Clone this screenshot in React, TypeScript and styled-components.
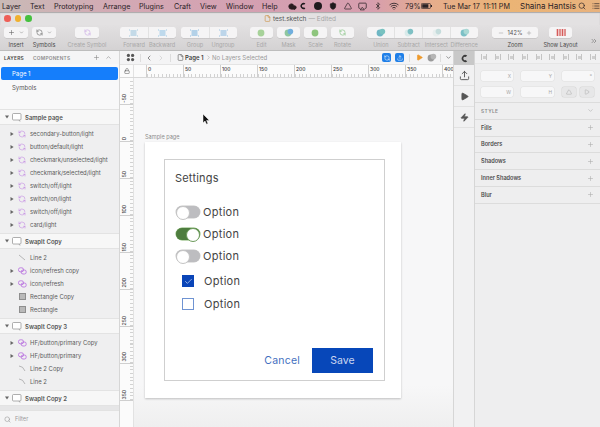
import React from 'react';
import styled, { createGlobalStyle } from 'styled-components';
import {
  Airplay, Bluetooth, ChevronDown, ChevronLeft, ChevronRight, ChevronUp, ChevronsRight, Cloud, File,
  Lock, Minus, Play, Plus, RefreshCcw, Search, Shield, Upload, Wifi, Zap, List, Triangle, Check,
} from 'lucide-react';

const GlobalStyle = createGlobalStyle`
  html, body { margin: 0; padding: 0; background: #eee; overflow: hidden; }
  * { box-sizing: border-box; }
  body { font-family: Inter, "Liberation Sans", sans-serif; }
`;

const Frame = styled.div`
  width: 600px;
  height: 427px;
  overflow: hidden;
  display: flex;
  flex-direction: column;
`;

/* menu bar */
const MenuBar = styled.div`
  height: 12px;
  flex: none;
  display: flex;
  align-items: center;
  padding-left: 2px;
  background: linear-gradient(90deg, #c9bab6 0, #d3a9b4 20%, #d49fb1 45%, #d79eae 62%, #e6ad8c 72%, #ebb475 85%, #e8b27e 100%);
  font-size: 7.2px;
  color: #2a2226;
  white-space: nowrap;
`;

const MenuItem = styled.span<{ $w: number; $ml?: number }>`
  width: ${p => p.$w}px;
  margin-left: ${p => p.$ml ?? 0}px;
  flex: none;
`;

const UserName = styled(MenuItem)`
  font-size: 8px;
`;

const MenuIcon = styled.span<{ $w: number }>`
  width: ${p => p.$w}px;
  flex: none;
  display: flex;
  justify-content: center;
  align-items: center;
`;

/* title + toolbar */
const TitleRow = styled.div`
  height: 13px;
  flex: none;
  position: relative;
  display: flex;
  align-items: center;
  justify-content: center;
  gap: 2px;
  background: #e3e1e2;
  box-shadow: inset 0 1px 1px rgba(0, 0, 0, 0.25);
  font-size: 6.5px;
  color: #555;
`;

const Lights = styled.div`
  position: absolute;
  left: 4px;
  top: 3px;
  display: flex;
  gap: 4px;
`;

const Light = styled.span<{ $c: string }>`
  width: 6.5px;
  height: 6.5px;
  border-radius: 50%;
  background: ${p => p.$c};
`;

const Edited = styled.span`
  color: #a5a5a5;
`;

const Toolbar = styled.div`
  height: 26px;
  flex: none;
  display: flex;
  padding-top: 2px;
  background: linear-gradient(#e2e0e1, #d4d2d3);
  border-bottom: 1px solid #bdbdbd;
`;

const ToolGroup = styled.div<{ $ml: number; $w: number }>`
  margin-left: ${p => p.$ml}px;
  width: ${p => p.$w}px;
  flex: none;
  display: flex;
  flex-direction: column;
`;

const ToolButton = styled.div`
  height: 11px;
  display: flex;
  background: #f5f4f5;
  border-radius: 2.5px;
  box-shadow: 0 0.5px 0.5px rgba(0, 0, 0, 0.15);
`;

const ToolSeg = styled.div`
  flex: 1;
  min-width: 0;
  display: flex;
  align-items: center;
  justify-content: center;
  gap: 4px;
  & + & { border-left: 1px solid #e2e2e2; }
`;

const ToolLabels = styled.div`
  display: flex;
  margin-top: 4px;
`;

const ToolLabel = styled.span<{ $on?: boolean }>`
  flex: 1;
  min-width: 0;
  display: flex;
  justify-content: center;
  white-space: nowrap;
  font-size: 5.6px;
  line-height: 7px;
  color: ${p => (p.$on ? '#4a4a4a' : '#a8a8a8')};
`;

const ZoomValue = styled.span`
  font-size: 5.6px;
  color: #555;
`;

const MoreTools = styled.div`
  margin: 2px 0 0 18px;
  color: #777;
`;

/* main split */
const Main = styled.div`
  flex: 1;
  min-height: 0;
  display: flex;
`;

/* left sidebar */
const Sidebar = styled.aside`
  width: 120px;
  flex: none;
  display: flex;
  flex-direction: column;
  background: #efeff0;
  border-right: 1px solid #d6d6d6;
  overflow: hidden;
`;

const TabHeader = styled.div`
  height: 13px;
  flex: none;
  display: flex;
  align-items: center;
  padding: 0 5px 0 4px;
  font-size: 4.8px;
  font-weight: 600;
  letter-spacing: 0.25px;
  background: #f5f5f6;
`;

const Tab = styled.span<{ $on?: boolean }>`
  color: ${p => (p.$on ? '#444' : '#8b8b8b')};
  width: ${p => (p.$on ? 29 : 60)}px;
`;

const HeaderIcons = styled.span`
  display: flex;
  gap: 5px;
  color: #888;
`;

const PageList = styled.div`
  height: 45px;
  flex: none;
  padding: 3px 1px 0;
  background: #f8f8f9;
`;

const PageRow = styled.div<{ $on?: boolean }>`
  height: 13px;
  display: flex;
  align-items: center;
  padding-left: 11px;
  border-radius: 2px;
  font-size: 6px;
  margin-bottom: 1px;
  background: ${p => (p.$on ? '#157efb' : 'transparent')};
  color: ${p => (p.$on ? '#fff' : '#555')};
`;

const GroupHeader = styled.div`
  height: 16px;
  flex: none;
  display: flex;
  align-items: center;
  gap: 3px;
  padding-left: 5px;
  background: #f7f7f7;
  border-top: 1px solid #e3e3e3;
  border-bottom: 1px solid #e3e3e3;
  font-size: 6px;
  font-weight: 600;
  color: #555;
`;

const Children = styled.div`
  flex: none;
  padding: 2px 0;
`;

const LayerRow = styled.div`
  height: 13px;
  display: flex;
  align-items: center;
  font-size: 5.9px;
  color: #5b5b5b;
  white-space: nowrap;
`;

const Disclosure = styled.span`
  width: 16px;
  flex: none;
  padding-left: 10px;
  display: flex;
`;

const LayerIcon = styled.span`
  width: 12px;
  flex: none;
  display: flex;
  justify-content: center;
  margin-right: 2px;
`;

const SelectedStub = styled.div`
  flex: 1;
  background: #e6e6e7;
`;

const FilterBar = styled.div`
  height: 17px;
  flex: none;
  display: flex;
  align-items: center;
  gap: 4px;
  padding-left: 4px;
  background: #f4f4f5;
  border-top: 1px solid #e2e2e2;
  font-size: 5.6px;
  color: #9a9a9a;
`;

/* center */
const Center = styled.section`
  flex: 1;
  min-width: 0;
  display: flex;
  flex-direction: column;
`;

const NavBar = styled.div`
  height: 13px;
  flex: none;
  display: flex;
  align-items: center;
  padding-left: 6px;
  background: #f4f4f5;
  font-size: 6px;
  color: #999;
  white-space: nowrap;
`;

const NavSep = styled.span<{ $ml: number }>`
  width: 1px;
  height: 8px;
  flex: none;
  background: #ddd;
  margin-left: ${p => p.$ml}px;
`;

const NavSlot = styled.span<{ $ml: number }>`
  margin-left: ${p => p.$ml}px;
  flex: none;
  display: flex;
  align-items: center;
`;

const PageName = styled.span`
  width: 20px;
  flex: none;
  color: #444;
  font-weight: 600;
  margin-left: 1px;
`;

const NoSelection = styled.span`
  width: 54px;
  flex: none;
`;

const BlueBadge = styled.span`
  width: 9px;
  height: 9px;
  border-radius: 2px;
  background: #1f7fe8;
  display: flex;
  align-items: center;
  justify-content: center;
`;

const TopRuler = styled.div`
  height: 14px;
  flex: none;
  display: flex;
  overflow: hidden;
  background: #fbfbfb;
  border-top: 1px solid #e4e4e4;
  border-bottom: 1px solid #d8d8d8;
`;

const RulerCorner = styled.div`
  width: 14px;
  flex: none;
  display: flex;
  align-items: center;
  justify-content: center;
  color: #555;
  border-right: 1px solid #e2e2e2;
`;

const RulerLead = styled.div`
  width: 12px;
  flex: none;
`;

const RulerCell = styled.div`
  width: 37px;
  flex: none;
  padding: 1px 0 0 1px;
  font-size: 5px;
  line-height: 6px;
  font-weight: 500;
  color: #444;
  border-left: 1px solid #cfcfcf;
  background: repeating-linear-gradient(90deg, #d2d2d2 0 1px, transparent 1px 3.7px) bottom / 100% 3px no-repeat;
`;

const CanvasRow = styled.div`
  flex: 1;
  min-height: 0;
  display: flex;
`;

const SideRuler = styled.div`
  width: 14px;
  flex: none;
  display: flex;
  flex-direction: column;
  background: #fbfbfb;
  border-right: 1px solid #e2e2e2;
  overflow: hidden;
`;

const SideCell = styled.div<{ $h: number }>`
  height: ${p => p.$h}px;
  flex: none;
  display: flex;
  flex-direction: column;
  justify-content: flex-end;
  align-items: flex-start;
  padding: 0 0 1px 1px;
  border-bottom: 1px solid #cfcfcf;
  background: repeating-linear-gradient(0deg, #d2d2d2 0 1px, transparent 1px 3.7px) right / 3px 100% no-repeat;
`;

const SideLabel = styled.span`
  writing-mode: vertical-rl;
  transform: rotate(180deg);
  font-size: 5px;
  line-height: 6px;
  font-weight: 500;
  color: #444;
`;

const Canvas = styled.div`
  flex: 1;
  position: relative;
  padding: 55px 0 0 11px;
  background: linear-gradient(#f7f7f8 0, #f7f7f8 88%, #efefef 100%);
  overflow: hidden;
`;

const Cursor = styled.svg`
  position: absolute;
  left: 68px;
  top: 36px;
`;

const ArtboardName = styled.div`
  height: 9px;
  font-size: 5.6px;
  line-height: 9px;
  color: #8d8d8d;
`;

const Artboard = styled.div`
  width: 256px;
  height: 256px;
  padding: 17px 16px 17px 19px;
  background: #fff;
  box-shadow: 0 1px 2px rgba(0, 0, 0, 0.22);
`;

const Card = styled.div`
  height: 222px;
  width: 221px;
  display: flex;
  flex-direction: column;
  padding: 11px 11px 7px;
  border: 1px solid #cfcfcf;
  font-family: Inter, "Open Sans", sans-serif;
`;

const CardTitle = styled.div`
  height: 14px;
  margin-left: -1px;
  font-size: 11px;
  line-height: 14px;
  letter-spacing: 0.2px;
  color: #444;
  margin-bottom: 16px;
`;

const OptionRow = styled.div`
  height: 22px;
  display: flex;
  align-items: center;
  gap: 3px;
`;

const OptionText = styled.span`
  font-size: 11px;
  letter-spacing: 0.3px;
  color: #444;
`;

const Toggle = styled.span<{ $on?: boolean }>`
  width: 24px;
  height: 12px;
  border-radius: 6px;
  display: flex;
  justify-content: ${p => (p.$on ? 'flex-end' : 'flex-start')};
  background: ${p => (p.$on ? '#4e7d3f' : '#bdbdc0')};
  box-shadow: 0 0 0 0.5px ${p => (p.$on ? '#7fb069' : '#c8c8c8')};

  &::after {
    content: '';
    width: 12px;
    height: 12px;
    border-radius: 50%;
    background: #fff;
    border: 1px solid ${p => (p.$on ? '#6d9b5c' : '#c4c4c4')};
  }
`;

const CheckGroup = styled.div`
  margin: 3px 0 0 6px;
`;

const CheckRow = styled.div`
  height: 22.5px;
  display: flex;
  align-items: center;
  gap: 10px;
`;

const CheckBox = styled.span<{ $on?: boolean }>`
  width: 12px;
  height: 12px;
  display: flex;
  align-items: center;
  justify-content: center;
  background: ${p => (p.$on ? '#0a45b8' : '#fff')};
  border: 1px solid ${p => (p.$on ? '#0a45b8' : '#6f93d2')};
`;

const Actions = styled.div`
  margin-top: auto;
  display: flex;
  justify-content: flex-end;
  align-items: center;
  gap: 12px;
`;

const CancelLink = styled.span`
  font-size: 10.5px;
  letter-spacing: 0.2px;
  color: #3f6fc0;
`;

const SaveButton = styled.span`
  width: 61px;
  height: 25px;
  display: flex;
  align-items: center;
  justify-content: center;
  font-size: 10.5px;
  background: #0747b9;
  color: #c9d6f0;
`;

/* right panel */
const IconStrip = styled.div`
  width: 22px;
  flex: none;
  display: flex;
  flex-direction: column;
  background: #f1f1f2;
  border-left: 1px solid #d6d6d6;
  border-right: 1px solid #d6d6d6;
`;

const StripTop = styled.div`
  height: 14px;
  flex: none;
  display: flex;
  align-items: center;
  justify-content: center;
  background: #c8c8c8;
`;

const StripCell = styled.div`
  height: 21px;
  flex: none;
  display: flex;
  align-items: center;
  justify-content: center;
  border-bottom: 1px solid #e2e2e2;
  color: #555;
`;

const Inspector = styled.aside`
  width: 125px;
  flex: none;
  display: flex;
  flex-direction: column;
  background: #eeeeef;
`;

const AlignBar = styled.div`
  height: 13px;
  flex: none;
  display: flex;
  align-items: center;
  justify-content: space-between;
  padding: 0 4px 0 6px;
  background: #f1f1f2;
  border-bottom: 1px solid #e6e6e6;
`;

const AlignMark = styled.span`
  width: 6px;
  height: 6px;
  border-left: 1px solid #c4c4c4;
  border-right: 1px solid #c4c4c4;
  background: linear-gradient(#cfcfcf, #cfcfcf) center / 3px 3px no-repeat;
`;

const FieldGrid = styled.div`
  flex: none;
  display: grid;
  grid-template-columns: 32px 33px 32px;
  column-gap: 8px;
  row-gap: 6px;
  padding: 7px 6px 5px;
  border-bottom: 1px solid #dcdcdc;
`;

const Field = styled.div`
  height: 10px;
  display: flex;
  align-items: center;
  justify-content: flex-end;
  padding-right: 2px;
  border-radius: 2px;
  background: #f7f7f8;
  box-shadow: 0 0 0 0.5px #e0e0e0;
  font-size: 4.8px;
  color: #a5a5a5;
`;

const FlipPair = styled.div`
  display: flex;
  justify-content: space-between;
`;

const FlipButton = styled.span`
  width: 14px;
  height: 10px;
  border-radius: 2px;
  display: flex;
  align-items: center;
  justify-content: center;
  background: #e7e7e8;
  box-shadow: 0 0 0 0.5px #d5d5d5;
  color: #aaa;
`;

const StyleRow = styled.div<{ $caption?: boolean }>`
  height: 16.8px;
  flex: none;
  display: flex;
  align-items: center;
  justify-content: space-between;
  padding: 0 6px;
  border-bottom: 1px solid #dcdcdc;
  font-size: ${p => (p.$caption ? 4.8 : 5.6)}px;
  font-weight: 600;
  letter-spacing: ${p => (p.$caption ? 0.4 : 0)}px;
  color: ${p => (p.$caption ? '#8a8a8a' : '#4d4d4d')};

  svg { color: #aeaeae; }
`;

/* little drawings */
const CraftC = ({ size = 9, color = '#3a3a3a' }: { size?: number; color?: string }) => (
  <svg width={size} height={size} viewBox="0 0 10 10">
    <path d="M8 1.6A4 4 0 1 0 8 8.4L6.4 6.7A1.9 1.9 0 1 1 6.4 3.3Z" fill={color} />
  </svg>
);

const Artb = () => (
  <svg width="10" height="9" viewBox="0 0 10 9" fill="none" stroke="#8c8c8c" strokeWidth="0.7">
    <rect x="0.5" y="0.5" width="8.5" height="6.5" rx="1" fill="#fff" />
    <path d="M7 7l1 1.5" />
  </svg>
);

const Tri = ({ down }: { down?: boolean }) => (
  <svg width="4" height="4" viewBox="0 0 4 4">
    <path d={down ? 'M0 .6h4L2 3.6z' : 'M.5 0v4L3.6 2z'} fill="#666" />
  </svg>
);

const SymbolIcon = () => <RefreshCcw size={8} color="#b569de" strokeWidth={1.3} />;

const LinkedIcon = () => (
  <svg width="9" height="8" viewBox="0 0 9 8" fill="none" stroke="#b569de" strokeWidth="0.8">
    <rect x="0.5" y="0.8" width="5" height="4" rx="1.8" />
    <rect x="3.2" y="3" width="5" height="4" rx="1.8" />
  </svg>
);

const LineIcon = ({ bend }: { bend?: boolean }) => (
  <svg width="8" height="7" viewBox="0 0 8 7" fill="none" stroke="#8f8f8f" strokeWidth="0.6">
    <path d={bend ? 'M1 1Q5 1 7 6' : 'M1 1L7 6'} />
  </svg>
);

const RectIcon = styled.span`
  width: 7px;
  height: 7px;
  background: #b9b9b9;
  border: 0.5px solid #8e8e8e;
`;

const Blob = ({ a, b }: { a: string; b?: string }) => (
  <svg width="10" height="9" viewBox="0 0 10 9">
    <circle cx="4" cy="5" r="3.4" fill={a} />
    {b && <circle cx="6.4" cy="3.6" r="2.8" fill={b} />}
  </svg>
);

const Pale = ({ c }: { c: string }) => (
  <svg width="9" height="8" viewBox="0 0 9 8">
    <rect x="1.5" y="1" width="6" height="6" fill={c} opacity="0.65" />
    <path d="M0 1h1M8 1h1M0 7h1M8 7h1" stroke={c} strokeWidth="1" />
  </svg>
);

const LayoutIcon = () => (
  <svg width="10" height="7" viewBox="0 0 10 7">
    <rect width="10" height="7" fill="#efc4c4" />
    <path d="M1.5 0v7M4 0v7M6.5 0v7M9 0v7" stroke="#d0504f" strokeWidth="0.9" />
  </svg>
);

const GridIcon = () => (
  <svg width="9" height="9" viewBox="0 0 9 9" fill="#555">
    <circle cx="2.4" cy="2.4" r="1.6" />
    <circle cx="6.6" cy="2.4" r="1.6" />
    <circle cx="2.4" cy="6.6" r="1.6" />
    <circle cx="6.6" cy="6.6" r="1.6" />
  </svg>
);

const Battery = () => (
  <svg width="11" height="6" viewBox="0 0 11 6">
    <rect x="0.4" y="0.4" width="9" height="5.2" rx="1" fill="none" stroke="#2a2226" strokeWidth="0.7" />
    <rect x="1.2" y="1.2" width="6.2" height="3.6" fill="#2a2226" />
    <rect x="10" y="2" width="1" height="2" fill="#2a2226" />
  </svg>
);

const Dot = styled.span`
  width: 8px;
  height: 8px;
  border-radius: 50%;
  background: #1f1a1d;
`;

type Tool = { label: string; on?: boolean; icon: React.ReactNode };
type Group = { ml: number; w: number; tools: Tool[] };

const dim = '#9a9a9a';
const toolGroups: Group[] = [
  { ml: 4, w: 24, tools: [{ label: 'Insert', on: true, icon: <><Plus size={7} color="#666" /><ChevronDown size={5} color="#666" /></> }] },
  { ml: 4, w: 24, tools: [{ label: 'Symbols', on: true, icon: <><RefreshCcw size={7} color="#666" /><ChevronDown size={5} color="#666" /></> }] },
  { ml: 19, w: 24, tools: [{ label: 'Create Symbol', icon: <RefreshCcw size={7} color="#c9a6e6" /> }] },
  { ml: 21, w: 56, tools: [{ label: 'Forward', icon: <Pale c="#a9cde0" /> }, { label: 'Backward', icon: <Pale c="#9fcbe6" /> }] },
  { ml: 5, w: 56, tools: [{ label: 'Group', icon: <Pale c="#8fbfe0" /> }, { label: 'Ungroup', icon: <Pale c="#9cc4e4" /> }] },
  { ml: 13, w: 23, tools: [{ label: 'Edit', icon: <Blob a="#a7d29a" /> }] },
  { ml: 4, w: 23, tools: [{ label: 'Mask', icon: <Blob a="#8fc7a0" b="#71aede" /> }] },
  { ml: 4, w: 23, tools: [{ label: 'Scale', icon: <Blob a="#8ec57d" /> }] },
  { ml: 4, w: 23, tools: [{ label: 'Rotate', icon: <RefreshCcw size={7} color="#7cc07a" strokeWidth={2} /> }] },
  { ml: 13, w: 111, tools: [
    { label: 'Union', icon: <Blob a="#6fb6c4" b="#79c2c0" /> },
    { label: 'Subtract', icon: <Blob a="#d9eaea" b="#7fc0c4" /> },
    { label: 'Intersect', icon: <Blob a="#e8eeee" b="#c5dcdc" /> },
    { label: 'Difference', icon: <Blob a="#7cc0c6" b="#a9d8d4" /> },
  ] },
  { ml: 14, w: 46, tools: [{ label: 'Zoom', on: true, icon: <><Minus size={6} color={dim} /><ZoomValue>142%</ZoomValue><Plus size={6} color={dim} /></> }] },
  { ml: 11, w: 23, tools: [{ label: 'Show Layout', on: true, icon: <LayoutIcon /> }] },
];

const menus: [string, number][] = [
  ['Layer', 28], ['Text', 24], ['Prototyping', 49], ['Arrange', 36], ['Plugins', 35],
  ['Craft', 26], ['View', 26], ['Window', 36], ['Help', 25],
];

type Layer = { name: string; kind: 'symbol' | 'linked' | 'line' | 'bend' | 'rect'; more?: boolean };
type Section = { name: string; layers: Layer[] };

const sections: Section[] = [
  {
    name: 'Sample page',
    layers: ['secondary-button/light', 'button/default/light', 'checkmark/unselected/light', 'checkmark/selected/light',
      'switch/off/light', 'switch/on/light', 'switch/off/light', 'card/light'].map(name => ({ name, kind: 'symbol' as const, more: true })),
  },
  {
    name: 'SwapIt Copy',
    layers: [
      { name: 'Line 2', kind: 'line' },
      { name: 'icon/refresh copy', kind: 'linked', more: true },
      { name: 'icon/refresh', kind: 'linked', more: true },
      { name: 'Rectangle Copy', kind: 'rect' },
      { name: 'Rectangle', kind: 'rect' },
    ],
  },
  {
    name: 'SwapIt Copy 3',
    layers: [
      { name: 'HF/button/primary Copy', kind: 'linked', more: true },
      { name: 'HF/button/primary', kind: 'linked', more: true },
      { name: 'Line 2 Copy', kind: 'bend' },
      { name: 'Line 2', kind: 'bend' },
    ],
  },
  { name: 'SwapIt Copy 2', layers: [] },
];

const kindIcon = (kind: Layer['kind']) => {
  if (kind === 'symbol') return <SymbolIcon />;
  if (kind === 'linked') return <LinkedIcon />;
  if (kind === 'line') return <LineIcon />;
  if (kind === 'bend') return <LineIcon bend />;
  return <RectIcon />;
};

const rulerMarks = [0, 50, 100, 150, 200, 250, 300, 350, 400];
const sideMarks = [-50, 0, 50, 100, 150, 200, 250, 300, 350];
const styleRows = ['Fills', 'Borders', 'Shadows', 'Inner Shadows', 'Blur'];

const App = () => (
  <Frame>
    <GlobalStyle />
    <MenuBar>
      {menus.map(([label, w]) => <MenuItem key={label} $w={w}>{label}</MenuItem>)}
      <MenuIcon $w={10}><Cloud size={9} fill="#2a1c20" color="#2a1c20" /></MenuIcon>
      <MenuIcon $w={12}><CraftC size={8} color="#1f1a1d" /></MenuIcon>
      <MenuIcon $w={18}><Dot /></MenuIcon>
      <MenuIcon $w={12}><Shield size={8} fill="#1f1a1d" color="#1f1a1d" /></MenuIcon>
      <MenuIcon $w={18}><Triangle size={8} color="#1f1a1d" /></MenuIcon>
      <MenuIcon $w={10}><Airplay size={9} color="#2a2226" /></MenuIcon>
      <MenuIcon $w={22}><Bluetooth size={8} color="#2a2226" /></MenuIcon>
      <MenuIcon $w={10}><Wifi size={10} color="#2a2226" /></MenuIcon>
      <MenuItem $w={15} $ml={6}>79%</MenuItem>
      <MenuIcon $w={12}><Battery /></MenuIcon>
      <MenuItem $w={40} $ml={11}>Tue Mar 17</MenuItem>
      <MenuItem $w={37}>11:11 PM</MenuItem>
      <UserName $w={57}>Shaina Hantsis</UserName>
      <MenuIcon $w={10}><Search size={8} color="#2a2226" /></MenuIcon>
      <MenuIcon $w={18}><List size={8} color="#2a2226" /></MenuIcon>
    </MenuBar>

    <TitleRow>
      <Lights>
        <Light $c="#ee5f57" />
        <Light $c="#f0b02f" />
        <Light $c="#45c03f" />
      </Lights>
      <File size={7} color="#c98a35" />
      <span>test.sketch</span>
      <Edited>— Edited</Edited>
    </TitleRow>

    <Toolbar>
      {toolGroups.map(group => (
        <ToolGroup key={group.tools[0].label} $ml={group.ml} $w={group.w}>
          <ToolButton>
            {group.tools.map(tool => <ToolSeg key={tool.label}>{tool.icon}</ToolSeg>)}
          </ToolButton>
          <ToolLabels>
            {group.tools.map(tool => <ToolLabel key={tool.label} $on={tool.on}>{tool.label}</ToolLabel>)}
          </ToolLabels>
        </ToolGroup>
      ))}
      <MoreTools><ChevronsRight size={8} /></MoreTools>
    </Toolbar>

    <Main>
      <Sidebar>
        <TabHeader>
          <Tab $on>LAYERS</Tab>
          <Tab>COMPONENTS</Tab>
          <HeaderIcons><Plus size={7} /><ChevronUp size={7} /></HeaderIcons>
        </TabHeader>
        <PageList>
          <PageRow $on>Page 1</PageRow>
          <PageRow>Symbols</PageRow>
        </PageList>
        {sections.map(section => (
          <React.Fragment key={section.name}>
            <GroupHeader>
              <Tri down />
              <Artb />
              {section.name}
            </GroupHeader>
            {section.layers.length > 0 && (
              <Children>
                {section.layers.map((layer, i) => (
                  <LayerRow key={i}>
                    <Disclosure>{layer.more && <Tri />}</Disclosure>
                    <LayerIcon>{kindIcon(layer.kind)}</LayerIcon>
                    {layer.name}
                  </LayerRow>
                ))}
              </Children>
            )}
          </React.Fragment>
        ))}
        <SelectedStub />
        <FilterBar>
          <Search size={7} />
          Filter
        </FilterBar>
      </Sidebar>

      <Center>
        <NavBar>
          <GridIcon />
          <NavSep $ml={5} />
          <NavSlot $ml={4}><ChevronLeft size={8} color="#555" /></NavSlot>
          <NavSlot $ml={4}><ChevronRight size={8} color="#ccc" /></NavSlot>
          <NavSep $ml={5} />
          <NavSlot $ml={6}><File size={7} color="#555" /></NavSlot>
          <PageName>Page 1</PageName>
          <NavSlot $ml={0}><ChevronRight size={7} color="#aaa" /></NavSlot>
          <NoSelection>No Layers Selected</NoSelection>
          <NavSlot $ml={116}><BlueBadge><RefreshCcw size={6} color="#fff" /></BlueBadge></NavSlot>
          <NavSlot $ml={4}><BlueBadge><Upload size={6} color="#fff" /></BlueBadge></NavSlot>
          <NavSep $ml={5} />
          <NavSlot $ml={6}><Play size={7} fill="#ee9a2b" color="#ee9a2b" /></NavSlot>
          <NavSlot $ml={4}><Blob a="#9a9a9a" b="#b5b5b5" /></NavSlot>
          <NavSep $ml={3} />
          <NavSlot $ml={4}><ChevronDown size={7} color="#555" /></NavSlot>
        </NavBar>
        <TopRuler>
          <RulerCorner><Lock size={6} /></RulerCorner>
          <RulerLead />
          {rulerMarks.map(mark => <RulerCell key={mark}>{mark}</RulerCell>)}
        </TopRuler>
        <CanvasRow>
          <SideRuler>
            {sideMarks.map((mark, i) => (
              <SideCell key={mark} $h={i === 0 ? 27 : 37}>
                <SideLabel>{mark}</SideLabel>
              </SideCell>
            ))}
          </SideRuler>
          <Canvas>
            <Cursor width="8" height="11" viewBox="0 0 8 11">
              <path d="M1 0v9l2-2 1.5 3.2 1.5-.7L4.6 6.4H7.4z" fill="#111" stroke="#fff" strokeWidth="0.5" />
            </Cursor>
            <ArtboardName>Sample page</ArtboardName>
            <Artboard>
              <Card>
                <CardTitle>Settings</CardTitle>
                <OptionRow><Toggle /><OptionText>Option</OptionText></OptionRow>
                <OptionRow><Toggle $on /><OptionText>Option</OptionText></OptionRow>
                <OptionRow><Toggle /><OptionText>Option</OptionText></OptionRow>
                <CheckGroup>
                  <CheckRow>
                    <CheckBox $on><Check size={9} color="#fff" strokeWidth={1.5} /></CheckBox>
                    <OptionText>Option</OptionText>
                  </CheckRow>
                  <CheckRow>
                    <CheckBox />
                    <OptionText>Option</OptionText>
                  </CheckRow>
                </CheckGroup>
                <Actions>
                  <CancelLink>Cancel</CancelLink>
                  <SaveButton>Save</SaveButton>
                </Actions>
              </Card>
            </Artboard>
          </Canvas>
        </CanvasRow>
      </Center>

      <IconStrip>
        <StripTop><CraftC size={9} /></StripTop>
        <StripCell><Upload size={11} /></StripCell>
        <StripCell><Play size={9} fill="#555" /></StripCell>
        <StripCell><Zap size={9} fill="#555" /></StripCell>
      </IconStrip>

      <Inspector>
        <AlignBar>
          {Array.from({ length: 9 }).map((_, i) => <AlignMark key={i} />)}
        </AlignBar>
        <FieldGrid>
          <Field>X</Field>
          <Field>Y</Field>
          <Field>°</Field>
          <Field>W</Field>
          <Field>H</Field>
          <FlipPair>
            <FlipButton><Triangle size={6} /></FlipButton>
            <FlipButton><Play size={6} /></FlipButton>
          </FlipPair>
        </FieldGrid>
        <StyleRow $caption>STYLE<ChevronDown size={7} /></StyleRow>
        {styleRows.map(row => <StyleRow key={row}>{row}<Plus size={7} /></StyleRow>)}
      </Inspector>
    </Main>
  </Frame>
);

export default App;
